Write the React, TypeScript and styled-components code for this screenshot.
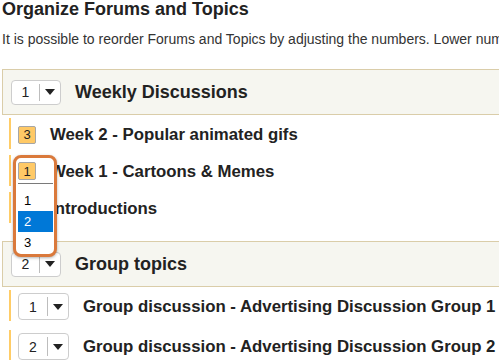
import { FC } from 'react';
import styled, { createGlobalStyle } from 'styled-components';

interface Topic {
    order: number;
    title: string;
    open?: boolean;
}

interface Forum {
    order: number;
    title: string;
    compact?: boolean;
    topics: Topic[];
}

const forums: Forum[] = [
    {
        order: 1,
        title: 'Weekly Discussions',
        compact: true,
        topics: [
            { order: 3, title: 'Week 2 - Popular animated gifs' },
            { order: 1, title: 'Week 1 - Cartoons & Memes', open: true },
            { order: 2, title: 'Introductions' },
        ],
    },
    {
        order: 2,
        title: 'Group topics',
        topics: [
            { order: 1, title: 'Group discussion - Advertising Discussion Group 1' },
            { order: 2, title: 'Group discussion - Advertising Discussion Group 2' },
        ],
    },
];

const OrderSelect: FC<{ value: number; width: number; height: number }> = ({ value, width, height }) => (
    <SelectBox $width={width} $height={height}>
        <SelectValue>{value}</SelectValue>
        <SelectArrow>
            <Triangle />
        </SelectArrow>
    </SelectBox>
);

const OpenList: FC<{ value: number; options: number[]; highlighted: number }> = ({ value, options, highlighted }) => (
    <Dropdown>
        <DropdownFace>
            <Badge>{value}</Badge>
        </DropdownFace>
        <OptionList>
            {options.map((o) => (
                <Option key={o} $active={o === highlighted}>
                    {o}
                </Option>
            ))}
        </OptionList>
    </Dropdown>
);

export default function App() {
    return (
        <>
            <GlobalStyle />
            <Page>
                <Title>Organize Forums and Topics</Title>
                <Intro>
                    It is possible to reorder Forums and Topics by adjusting the numbers. Lower numbers appear first.
                </Intro>
                {forums.map((forum) => (
                    <section key={forum.title}>
                        <ForumHeader>
                            <OrderSelect value={forum.order} width={50} height={25} />
                            <ForumTitle>{forum.title}</ForumTitle>
                        </ForumHeader>
                        <TopicList $gap={forum.compact ? 6 : 9} $bottom={forum.compact ? 18 : 0}>
                            {forum.topics.map((topic) => (
                                <TopicRow key={topic.title}>
                                    {forum.compact ? (
                                        <Badge>{topic.order}</Badge>
                                    ) : (
                                        <OrderSelect value={topic.order} width={51} height={27} />
                                    )}
                                    <TopicTitle>{topic.title}</TopicTitle>
                                    {topic.open && (
                                        <OpenList
                                            value={topic.order}
                                            options={forum.topics.map((_, i) => i + 1)}
                                            highlighted={2}
                                        />
                                    )}
                                </TopicRow>
                            ))}
                        </TopicList>
                    </section>
                ))}
            </Page>
        </>
    );
}

const GlobalStyle = createGlobalStyle`
    html, body {
        margin: 0;
        padding: 0;
        background: #fff;
        overflow: hidden;
    }
    body {
        font-family: "Liberation Sans", Arial, sans-serif;
        color: #222;
    }
`;
const Page = styled.div`
    width: 540px;
    padding-left: 2px;
`;
const Title = styled.h1`
    margin: 0;
    font-size: 18px;
    line-height: 18px;
    font-weight: bold;
    color: #222;
`;
const Intro = styled.p`
    margin: 13px 0 22px;
    font-size: 14px;
    line-height: 16px;
    color: #333;
    white-space: nowrap;
`;
const ForumHeader = styled.div`
    display: flex;
    align-items: center;
    box-sizing: border-box;
    height: 46px;
    padding-left: 8px;
    background: #f6f6f0;
    border: 1px solid #dacda9;
`;
const ForumTitle = styled.h2`
    margin: 0 0 0 14px;
    font-size: 18px;
    font-weight: bold;
    color: #222;
`;
const TopicList = styled.div<{ $gap: number; $bottom: number }>`
    display: flex;
    flex-direction: column;
    gap: ${({ $gap }) => $gap}px;
    padding: 3px 0 ${({ $bottom }) => $bottom}px 7px;
`;
const TopicRow = styled.div`
    position: relative;
    display: flex;
    align-items: center;
    box-sizing: border-box;
    height: 31px;
    padding: 2px 0 0 7px;
    border-left: 2px solid #ffcc66;
`;
const TopicTitle = styled.h3`
    margin: 0 0 0 14px;
    font-size: 16.8px;
    font-weight: bold;
    color: #222;
    white-space: nowrap;
`;
const SelectBox = styled.div<{ $width: number; $height: number }>`
    display: flex;
    align-items: center;
    box-sizing: border-box;
    flex: none;
    width: ${({ $width }) => $width}px;
    height: ${({ $height }) => $height}px;
    background: #fff;
    border: 1px solid #cdcdcd;
    border-radius: 4px;
`;
const SelectValue = styled.span`
    flex: 1;
    text-align: center;
    font-size: 14px;
    color: #222;
`;
const SelectArrow = styled.span`
    display: flex;
    align-items: center;
    justify-content: center;
    width: 20px;
    height: calc(100% - 6px);
    border-left: 1px solid #bdbdbd;
`;
const Triangle = styled.span`
    width: 0;
    height: 0;
    border-left: 5px solid transparent;
    border-right: 5px solid transparent;
    border-top: 6px solid #222;
`;
const Badge = styled.span`
    display: flex;
    align-items: center;
    justify-content: center;
    box-sizing: border-box;
    flex: none;
    width: 18px;
    height: 18px;
    background: #ffc966;
    border: 1px solid #a6a6a6;
    border-radius: 2px;
    font-size: 13px;
    color: #222;
`;
const Dropdown = styled.div`
    position: absolute;
    top: 0;
    left: 2px;
    z-index: 2;
    box-sizing: border-box;
    width: 44px;
    height: 102px;
    padding: 0 1px 0 2px;
    background: #fff;
    border: 3px solid #da793b;
    border-radius: 8px;
    box-shadow: 0 1px 3px rgba(0, 0, 0, 0.3);
`;
const DropdownFace = styled.div`
    box-sizing: border-box;
    height: 26px;
    padding-top: 4px;
    border-bottom: 1px solid #7a7a7a;
`;
const OptionList = styled.div`
    padding-top: 6px;
`;
const Option = styled.div<{ $active: boolean }>`
    height: 21px;
    line-height: 21px;
    padding-left: 6px;
    font-size: 13px;
    background: ${({ $active }) => ($active ? '#0078d7' : 'transparent')};
    color: ${({ $active }) => ($active ? '#fff' : '#000')};
`;
